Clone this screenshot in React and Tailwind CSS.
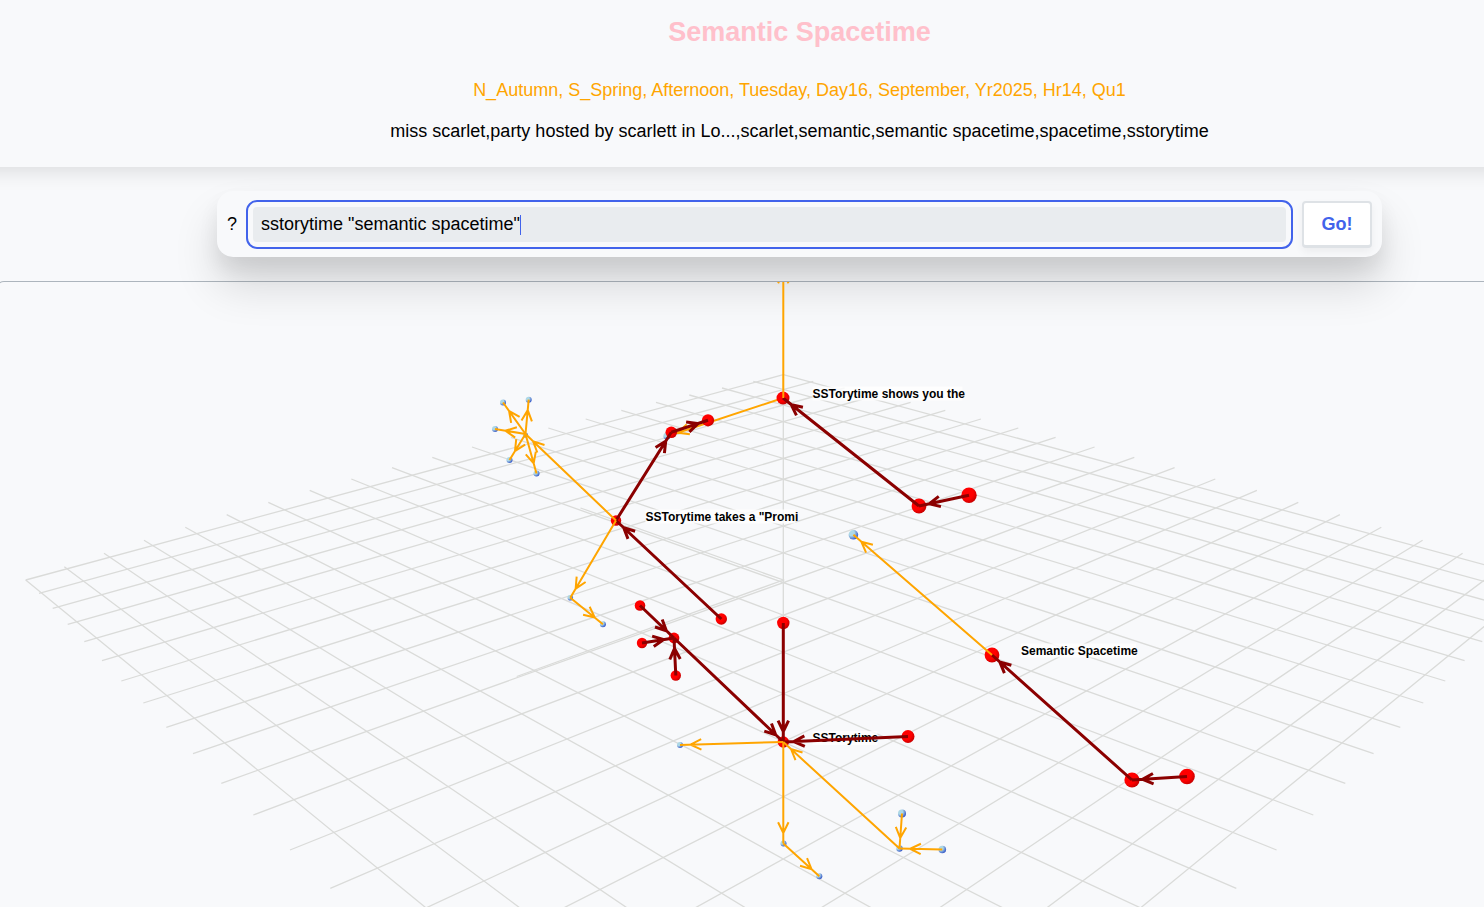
import { useState } from "react";

const AXIS = 783.3;

// One family of floor lines: [x1, y1, x2, y2]. The other family is its reflection about AXIS.
const FLOOR = [
  [25.7, 580, 483.3, 954.8],
  [64.3, 566.7, 583.3, 955.4],
  [104, 553.3, 704, 960],
  [144, 540.3, 844, 968],
  [185.3, 527.3, 985.3, 971],
  [226.7, 514.7, 1126.7, 970.6],
  [268.3, 502.3, 1190.7, 931.2],
  [309.7, 490.3, 1236.3, 888.3],
  [351.3, 479, 1276.6, 850],
  [392, 467.7, 1313.3, 815],
  [432.3, 457.3, 1345.3, 783.3],
  [472, 447, 1373.6, 753.7],
  [511, 437.3, 1400.3, 727.3],
  [548.3, 428, 1423.3, 703],
  [585.7, 419, 1445.3, 681],
  [621.3, 410.3, 1464.6, 660.7],
  [656, 402.3, 1482.3, 641.7],
  [689.3, 395, 1498.9, 624.3],
  [722, 388, 1513.9, 608.3],
  [753.3, 381.3, 1527.6, 593.3],
  [783.3, 374.7, 1540.9, 580],
];

const HITS = [
  [783, 398, 6.5],
  [919, 506, 7.4],
  [969, 495.3, 7.7],
  [708, 420.3, 6.1],
  [671.3, 432.3, 5.8],
  [616, 520.5, 5.2],
  [721.3, 619, 5.7],
  [783.3, 623, 6.2],
  [640, 605.5, 5.3],
  [642, 643, 5.2],
  [674, 638, 5.4],
  [675.8, 675.5, 5.2],
  [783.3, 742, 5.7],
  [908, 736.5, 6.5],
  [992, 655, 7.4],
  [1132, 780, 7.6],
  [1187, 776.5, 7.8],
];

const NEIGHBOURS = [
  [503, 402.5, 3],
  [528.7, 399.7, 3],
  [495, 429, 3],
  [509.5, 460, 3],
  [536.5, 473.5, 3],
  [525.5, 435, 2.6],
  [570.3, 597.7, 2.8],
  [602.9, 624.2, 3],
  [680, 745, 3],
  [783.5, 843.5, 3],
  [819.3, 876.2, 3],
  [902, 813.5, 4],
  [899.5, 848.5, 3.2],
  [942.3, 849.5, 3.8],
  [853.4, 534.8, 4.8],
  [667, 436, 3.6],
];

const STRONG = [
  [919, 506, 783, 398],
  [969, 495.3, 919, 506],
  [671.3, 432.3, 708, 420.3],
  [616, 520.5, 671.3, 432.3],
  [721.3, 619, 616, 520.5],
  [640, 605.5, 674, 638],
  [642, 643, 674, 638],
  [675.8, 675.5, 674, 638],
  [674, 638, 783.3, 742],
  [783.3, 623, 783.3, 742],
  [908, 736.5, 783.3, 742],
  [1132, 780, 992, 655],
  [1187, 776.5, 1132, 780],
];

const WEAK = [
  [783.3, 398, 783.3, 262],
  [783, 398, 668, 436],
  [616, 520.5, 525.5, 434],
  [525.5, 434, 503, 402.5],
  [525.5, 434, 528.7, 399.7],
  [525.5, 434, 495, 429],
  [525.5, 434, 509.5, 460],
  [525.5, 434, 536.5, 473.5],
  [616, 520.5, 570.3, 597.7],
  [570.3, 597.7, 602.9, 624.2],
  [783.3, 742, 680, 745],
  [783.3, 742, 783.3, 843.5],
  [783.3, 843.5, 819.3, 876.2],
  [899.5, 848.5, 783.3, 742],
  [902, 813.5, 899.5, 848.5],
  [942.3, 849.5, 899.5, 848.5],
  [992, 655, 853.4, 534.8],
];

const LABELS = [
  { x: 812.5, y: 397.5, w: 150, text: "SSTorytime shows you the" },
  { x: 645.5, y: 520.5, w: 150, text: 'SSTorytime takes a "Promi' },
  { x: 1021, y: 654.5, w: 115, text: "Semantic Spacetime" },
  { x: 812.5, y: 742, w: 65, text: "SSTorytime" },
];

function arrowPath([x1, y1, x2, y2]) {
  const a = Math.atan2(y1 - y2, x1 - x2);
  const tipX = x2 + 10.5 * Math.cos(a);
  const tipY = y2 + 10.5 * Math.sin(a);
  const arm = (t) => `${tipX + 12 * Math.cos(a + t)} ${tipY + 12 * Math.sin(a + t)}`;
  return `M${x1} ${y1}L${x2} ${y2}M${arm(0.45)}L${tipX} ${tipY}L${arm(-0.45)}`;
}

function Graph() {
  return (
    <svg
      className="block h-[625px] w-full"
      viewBox="-3 282 1506 625"
      preserveAspectRatio="xMinYMin slice"
      role="img"
      aria-label="Graph of search results"
    >
      <defs>
        <radialGradient id="hit" cx="35%" cy="35%" r="70%">
          <stop offset="0.6" stopColor="#ff0000" />
          <stop offset="1" stopColor="#c40000" />
        </radialGradient>
        <radialGradient id="near" cx="30%" cy="30%" r="75%">
          <stop offset="0.4" stopColor="#add8e6" />
          <stop offset="1" stopColor="#3558c8" />
        </radialGradient>
      </defs>

      <g stroke="#dadbd9" strokeWidth="1.3" fill="none">
        {FLOOR.map(([x1, y1, x2, y2]) => (
          <path
            key={x1}
            d={`M${x1} ${y1}L${x2} ${y2}M${2 * AXIS - x1} ${y1}L${2 * AXIS - x2} ${y2}`}
          />
        ))}
        <path d="M783.3 374.7V623" />
        <path d="M580.5 508L783.3 580L516.7 676.5" />
      </g>

      {LABELS.map((l) => (
        <g key={l.text}>
          <rect x={l.x} y={l.y - 11} width={l.w} height="14" fill="#ffffff" fillOpacity="0.8" />
          <text x={l.x} y={l.y} className="fill-black text-[12px] font-bold">
            {l.text}
          </text>
        </g>
      ))}

      {NEIGHBOURS.map(([x, y, r]) => (
        <circle key={`${x},${y}`} cx={x} cy={y} r={r} fill="url(#near)" />
      ))}
      <path d={arrowPath(WEAK[1])} stroke="#ffa500" strokeWidth="2" fill="none" />
      {HITS.map(([x, y, r]) => (
        <circle key={`${x},${y}`} cx={x} cy={y} r={r} fill="url(#hit)" />
      ))}
      <g stroke="#8b0000" strokeWidth="3" fill="none">
        {STRONG.map((e) => (
          <path key={e.join()} d={arrowPath(e)} />
        ))}
      </g>
      <g stroke="#ffa500" strokeWidth="2" fill="none">
        {WEAK.filter((_, i) => i !== 1).map((e) => (
          <path key={e.join()} d={arrowPath(e)} />
        ))}
      </g>
    </svg>
  );
}

export default function App() {
  const [query, setQuery] = useState('sstorytime "semantic spacetime"');

  return (
    <div className="overflow-hidden bg-[#f8f9fb] font-['Liberation_Sans',Arial,sans-serif] text-lg text-black">
      <header className="-mx-8 flex flex-col items-center pt-4 pb-[22px] pl-[115px] text-center shadow-[0_4px_20px_rgba(0,0,0,0.12)]">
        <h1 className="text-[27px] leading-8 font-bold text-[#ffc0cb]">Semantic Spacetime</h1>
        <p className="mt-7 leading-7 text-[#ffa500]">
          N_Autumn, S_Spring, Afternoon, Tuesday, Day16, September, Yr2025, Hr14, Qu1
        </p>
        <p className="mt-[13px] leading-7">
          miss scarlet,party hosted by scarlett in Lo...,scarlet,semantic,semantic
          spacetime,spacetime,sstorytime
        </p>
      </header>

      <main>
        <div className="mt-6 flex justify-center pl-[115px]">
          <form
            onSubmit={(e) => e.preventDefault()}
            className="flex h-[66px] w-[85.1%] items-center rounded-2xl bg-[#f8f9fb] px-2.5 shadow-[0_12px_20px_rgba(0,0,0,0.07),0_28px_45px_rgba(0,0,0,0.14)]"
          >
            <label htmlFor="query">?</label>
            <div className="relative mx-4 flex flex-1">
              <input
                id="query"
                type="text"
                value={query}
                onChange={(e) => setQuery(e.target.value)}
                className="h-[35px] w-full rounded bg-[#e9ecef] px-2 caret-transparent outline-2 outline-offset-5 outline-[#4263eb]"
              />
              <span className="absolute top-2 left-[267px] h-5 w-px bg-[#4263eb]" />
            </div>
            <button
              type="submit"
              className="h-[47px] w-[70px] rounded border-2 border-b-3 border-[#dee2e6] bg-white font-bold text-[#4263eb] shadow-[0_4px_8px_rgba(0,0,0,0.05)]"
            >
              Go!
            </button>
          </form>
        </div>

        <section className="mt-6 -mr-5 -ml-1 rounded-t-lg border border-b-0 border-[#adb5bd]">
          <Graph />
        </section>
      </main>
    </div>
  );
}
